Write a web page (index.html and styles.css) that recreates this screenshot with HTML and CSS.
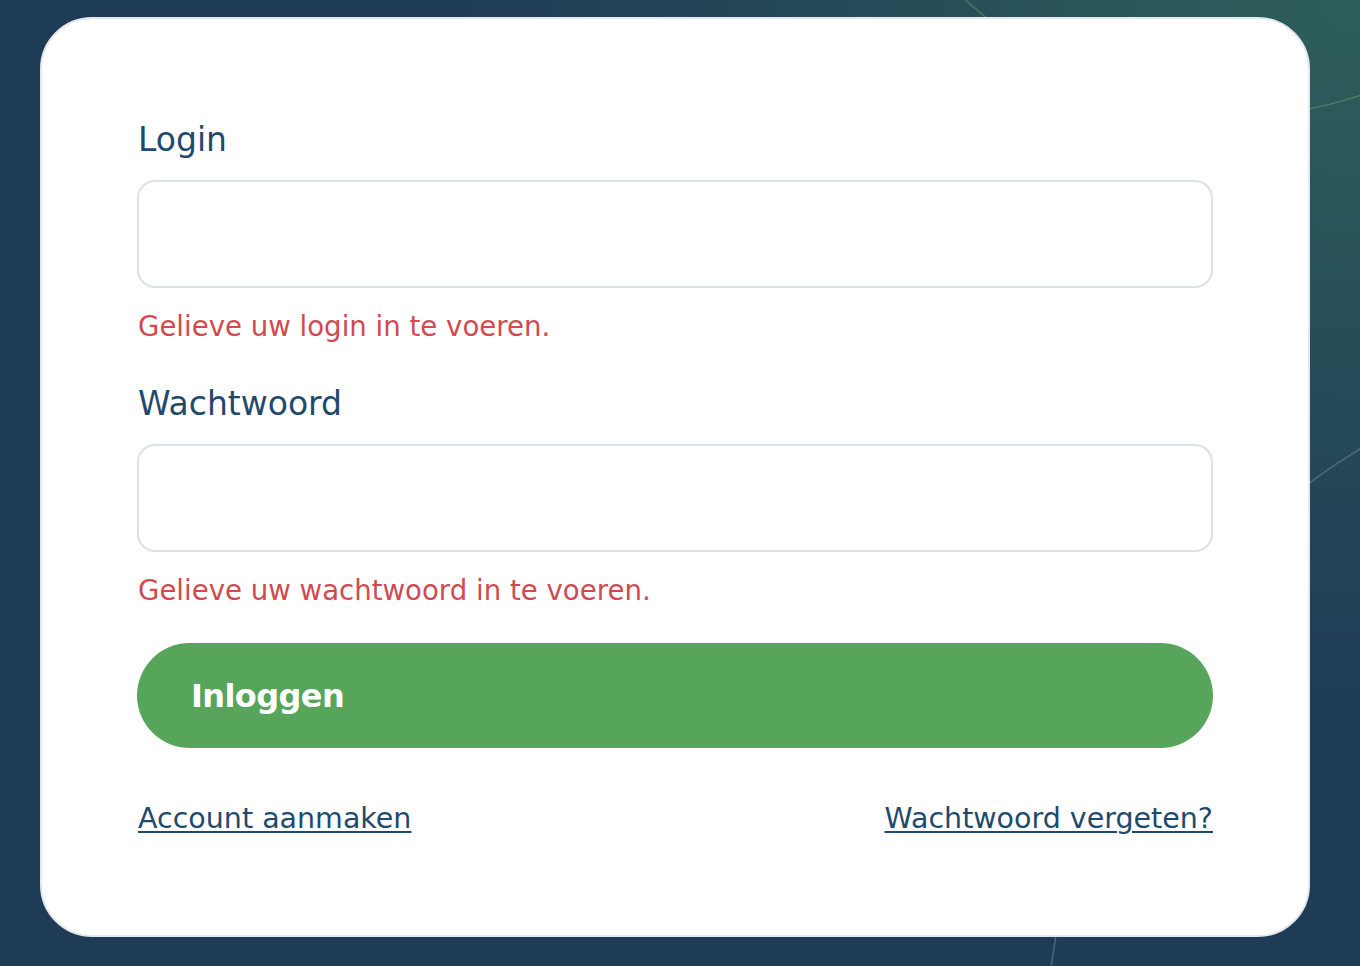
FILE: index.html
```html
<!DOCTYPE html>
<html lang="nl">
<head>
  <meta charset="UTF-8" />
  <title>Inloggen</title>
  <link rel="stylesheet" href="styles.css">
</head>
<body>
  <!-- Decoratieve lijnen op de achtergrond -->
  <svg class="backdrop" width="1360" height="966" xmlns="http://www.w3.org/2000/svg">
    <path d="M 960 -5 Q 1150 170 1370 92" class="line-green" />
    <path d="M 1050 975 Q 1100 600 1370 443" class="line-blue" />
  </svg>

  <div class="page">
    <form class="card" novalidate>
      <div class="field">
        <label class="label" for="login">Login</label>
        <input class="input" id="login" type="text" />
        <div class="error">Gelieve uw login in te voeren.</div>
      </div>

      <div class="field">
        <label class="label" for="password">Wachtwoord</label>
        <input class="input" id="password" type="password" />
        <div class="error">Gelieve uw wachtwoord in te voeren.</div>
      </div>

      <button class="submit" type="button">Inloggen</button>

      <div class="links">
        <a href="#" class="link">Account aanmaken</a>
        <a href="#" class="link">Wachtwoord vergeten?</a>
      </div>
    </form>
  </div>
</body>
</html>
```

FILE: styles.css
```css
html, body {
  margin: 0;
  height: 100%;
}

body {
  background:
    radial-gradient(ellipse 900px 700px at 100% 0%, #2e5f5a 0%, rgba(46, 95, 90, 0) 100%),
    #1e3c56;
  font-family: "DejaVu Sans", sans-serif;
  overflow: hidden;
}

.backdrop {
  position: fixed;
  top: 0;
  left: 0;
}

.line-green {
  fill: none;
  stroke: rgba(110, 170, 120, 0.45);
  stroke-width: 1.5;
}

.line-blue {
  fill: none;
  stroke: rgba(150, 180, 205, 0.35);
  stroke-width: 1.5;
}

.page {
  position: relative;
  padding: 17px 50px 0 40px;
}

.card {
  background: #fff;
  border: 2px solid #e3e8ee;
  border-radius: 52px;
  padding: 101px 95px 98px 95px;
}

.field {
  margin-bottom: 39px;
}

.label {
  display: block;
  font-size: 33px;
  line-height: 40px;
  color: #1f4a6e;
  margin-bottom: 20px;
  padding-left: 1px;
}

.input {
  display: block;
  box-sizing: border-box;
  width: 100%;
  height: 108px;
  border: 2px solid #dbe1e8;
  border-radius: 18px;
  background: #fff;
  outline: none;
}

.error {
  margin-top: 21px;
  padding-left: 1px;
  font-size: 27.6px;
  line-height: 36px;
  color: #d14a4f;
}

.submit {
  display: flex;
  align-items: center;
  width: 100%;
  height: 105px;
  margin-top: -5px;
  padding: 0 54px;
  border: none;
  border-radius: 53px;
  background: #56a55a;
  color: #fff;
  font-family: "DejaVu Sans", sans-serif;
  font-weight: bold;
  font-size: 32px;
  letter-spacing: -0.6px;
}

.links {
  display: flex;
  justify-content: space-between;
  margin-top: 53px;
  padding-left: 1px;
  font-size: 28.5px;
  line-height: 36px;
}

.link {
  color: #1f4a6e;
  text-decoration: underline;
  text-decoration-thickness: 2px;
  text-underline-offset: 3px;
}
```
